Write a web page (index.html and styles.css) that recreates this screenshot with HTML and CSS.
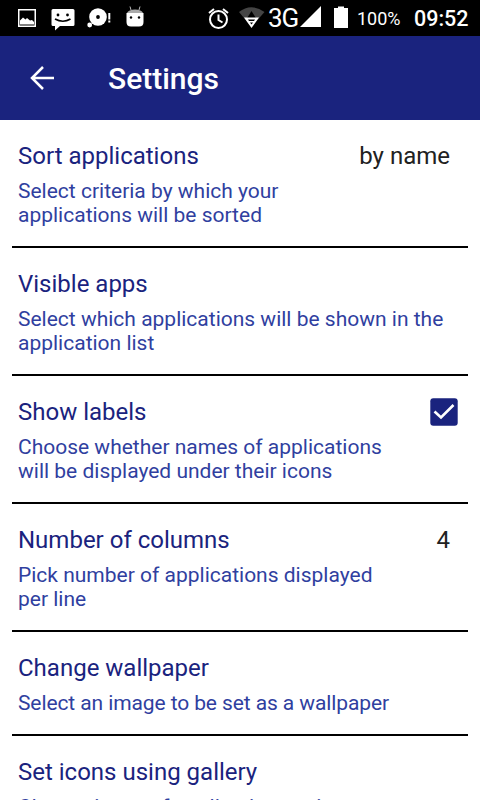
FILE: index.html
```html
<!DOCTYPE html>
<html lang="en">
<head>
<meta charset="utf-8">
<title>Settings</title>
<link rel="stylesheet" href="styles.css">
</head>
<body>
<div class="screen">
  <div class="status">
    <svg width="150" height="36" viewBox="0 0 150 36">
      <path fill="#fff" fill-rule="evenodd" d="M18 9h18v18H18zM19.5 10.500v15h15v-15z"/>
      <path fill="#fff" d="M20 24.500v-4l3-3 2.500 2 1.500-1.500 3 2.500 2-.5 2 2v2.500z"/>
      <path fill="#fff" d="M53 9h20q1.500 0 1.500 1.500v14q0 1.500-1.500 1.500H60l-5 4.500V26h-2q-1.500 0-1.500-1.500v-14Q51.500 9 53 9z"/>
      <circle cx="58" cy="15" r="1.400"/><circle cx="67.500" cy="15" r="1.400"/><path d="M55 19q8 4.500 15.500 0" fill="none" stroke="#000" stroke-width="1.700"/>
      <circle cx="98" cy="17" r="8.800" fill="#fff"/><circle cx="98" cy="17" r="1.900"/>
      <circle cx="89.700" cy="25" r="2.400" fill="#fff"/>
      <path fill="#fff" d="M108.300 13h2v6.500h-2zM108.300 20.500h2v2h-2z"/>
      <path fill="#fff" d="M126.500 13h17v9q0 4.500-4.500 4.500h-8q-4.500 0-4.500-4.500z"/><path fill="#aaa" d="M127 13q1.500-3.500 8-3.500t8 3.500z"/>
      <path d="M131 10l-1-3.500M139 10l1-3.500" stroke="#bbb"/><circle cx="131" cy="17.500" r="1.200"/><circle cx="139" cy="17.500" r="1.200"/>
    </svg>
    <svg width="62" height="36" viewBox="206 0 62 36" class="alarm">
      <circle cx="218.500" cy="19.500" r="8.500" fill="none" stroke="#fff" stroke-width="2"/><path d="M218.500 14.500v5.500l4 2.500M209 13l5-4M228 13l-5-4" fill="none" stroke="#fff" stroke-width="2"/>
      <path d="M239 12q12-9.500 25.500 0L251.500 27z" fill="#444"/><path d="M251.500 11l5 8h-10z"/><path d="M244 17.500h15L251.500 28z" fill="#fff"/><path d="M248 19.500h7l-1 1.500h-5zM250 22.500h3l-1.500 2z"/>
    </svg>
    <span class="net">3G</span>
    <svg width="50" height="36" viewBox="300 0 50 36" class="signal"><path fill="#fff" d="M300 27L321 6v21zM334 8h4V6.500h6V8h4v20h-14z"/></svg>
    <span class="pct">100%</span><span class="time">09:52</span>
  </div>
  <header class="bar"><svg width="26" height="26" viewBox="0 0 26 26"><path d="M25 13H3M14 2L3 13l11 11" fill="none" stroke="#fff" stroke-width="2.500"/></svg><h1>Settings</h1></header>
  <main>
    <section class="row"><h2>Sort applications</h2><p>Select criteria by which your<br>applications will be sorted</p><span class="value">by name</span></section>
    <section class="row"><h2>Visible apps</h2><p>Select which applications will be shown in the<br>application list</p></section>
    <section class="row"><h2>Show labels</h2><p>Choose whether names of applications<br>will be displayed under their icons</p><svg class="check" width="28" height="28" viewBox="0 0 28 28"><rect x=".3" y=".3" width="27.400" height="27.400" rx="3" fill="#1a237e"/><path d="M4.500 13.500l6.500 6L23.500 7" fill="none" stroke="#fff" stroke-width="2.600"/></svg></section>
    <section class="row"><h2>Number of columns</h2><p>Pick number of applications displayed<br>per line</p><span class="value">4</span></section>
    <section class="row"><h2>Change wallpaper</h2><p class="tight">Select an image to be set as a wallpaper</p></section>
    <section class="row"><h2>Set icons using gallery</h2><p>Choose icons of applications using</p></section>
  </main>
</div>
</body>
</html>
```
FILE: styles.css
```css
body { margin: 0; background: #fff; font-family: Roboto, sans-serif; }
.screen { width: 480px; height: 800px; overflow: hidden; }
.status { height: 36px; background: #000; color: #fff; display: flex; align-items: center; }
.status svg { flex: none; }
.alarm { margin-left: 56px; }
.net { width: 32px; font-size: 26px; letter-spacing: -1px; }
.signal { margin-right: 7px; }
.pct { width: 57px; font-size: 18px; }
.time { padding-top: 1px; font-size: 21.500px; font-weight: 500; }
.bar { height: 84px; background: #1a237e; color: #fff; display: flex; align-items: center; padding-left: 29px; }
.bar h1 { margin: 0 0 0 53px; font-size: 30px; font-weight: 500; }
main { padding: 0 12px; }
.row { display: grid; grid-template-columns: 1fr auto; padding: 20px 18px 19px 6px; border-bottom: 2px solid #000; }
h2 { margin: 0; font-size: 24px; font-weight: 400; line-height: 32px; color: #1a237e; }
p { grid-column: 1 / 3; grid-row: 2; margin: 7px 0 0; font-size: 21px; line-height: 24px; color: #303f9f; white-space: nowrap; }
.tight { letter-spacing: -0.1px; }
.value { grid-column: 2; grid-row: 1; font-size: 24px; line-height: 32px; color: #212121; }
.check { grid-column: 2; grid-row: 1; margin: 2px -8px 0 0; }
```
